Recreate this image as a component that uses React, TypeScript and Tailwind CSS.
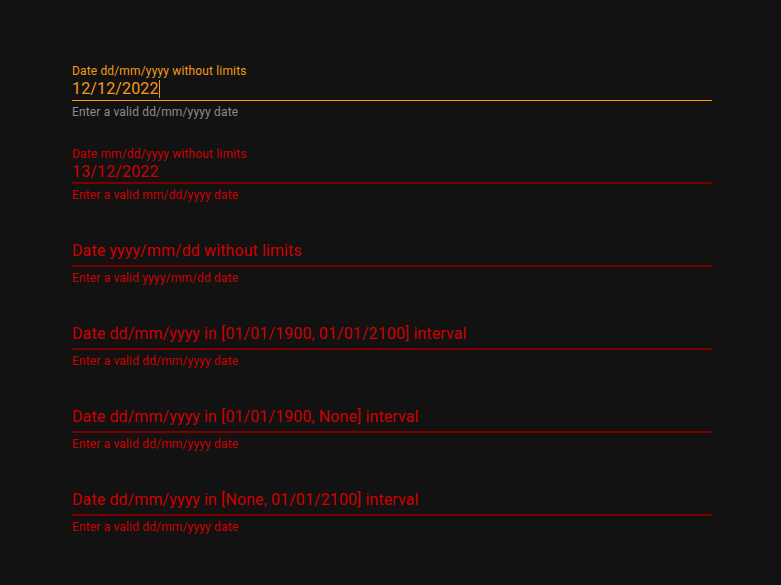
import React from 'react';

type Field = {
  label: string;
  value?: string;
  hint: string;
  focused?: boolean;
  error?: boolean;
};

const fields: Field[] = [
  { label: 'Date dd/mm/yyyy without limits', value: '12/12/2022', hint: 'Enter a valid dd/mm/yyyy date', focused: true },
  { label: 'Date mm/dd/yyyy without limits', value: '13/12/2022', hint: 'Enter a valid mm/dd/yyyy date', error: true },
  { label: 'Date yyyy/mm/dd without limits', hint: 'Enter a valid yyyy/mm/dd date', error: true },
  { label: 'Date dd/mm/yyyy in [01/01/1900, 01/01/2100] interval', hint: 'Enter a valid dd/mm/yyyy date', error: true },
  { label: 'Date dd/mm/yyyy in [01/01/1900, None] interval', hint: 'Enter a valid dd/mm/yyyy date', error: true },
  { label: 'Date dd/mm/yyyy in [None, 01/01/2100] interval', hint: 'Enter a valid dd/mm/yyyy date', error: true },
];

const DateField: React.FC<{ field: Field }> = ({ field }) => {
  const color = field.error ? 'text-[#cc0000]' : 'text-[#f29a1a]';
  return (
    <div className="h-[83px] flex flex-col">
      <div className={`h-[17px] pt-[2px] text-xs leading-[15px] tracking-[0.15px] ${color}`}>
        {field.value ? field.label : ''}
      </div>
      <div className="h-[21px] flex items-start">
        {field.value ? (
          <span className={`pt-px text-base leading-[18px] tracking-[0.15px] flex items-start ${color}`}>
            {field.value}
            {field.focused && <span className="inline-block w-px h-[18px] bg-[#f29a1a]" />}
          </span>
        ) : (
          <span className={`-mt-px text-base leading-[14px] tracking-[0.1px] ${color}`}>{field.label}</span>
        )}
      </div>
      {field.error ? (
        <div className="h-[2px] -mt-px bg-[#7d0000]" />
      ) : (
        <div className="h-px bg-[#ff9800]" />
      )}
      <div
        className={`mt-[3px] text-xs leading-[16px] tracking-[0.15px] ${
          field.error ? 'text-[#cc0000]' : 'text-[#8c8c8c]'
        }`}
      >
        {field.hint}
      </div>
    </div>
  );
};

export default function App() {
  return (
    <div className="min-h-screen bg-[#121212] pt-[62px] pl-[72px] font-['Roboto',sans-serif]">
      <div className="w-[640px] flex flex-col">
        {fields.map((f, i) => (
          <DateField key={i} field={f} />
        ))}
      </div>
    </div>
  );
}
